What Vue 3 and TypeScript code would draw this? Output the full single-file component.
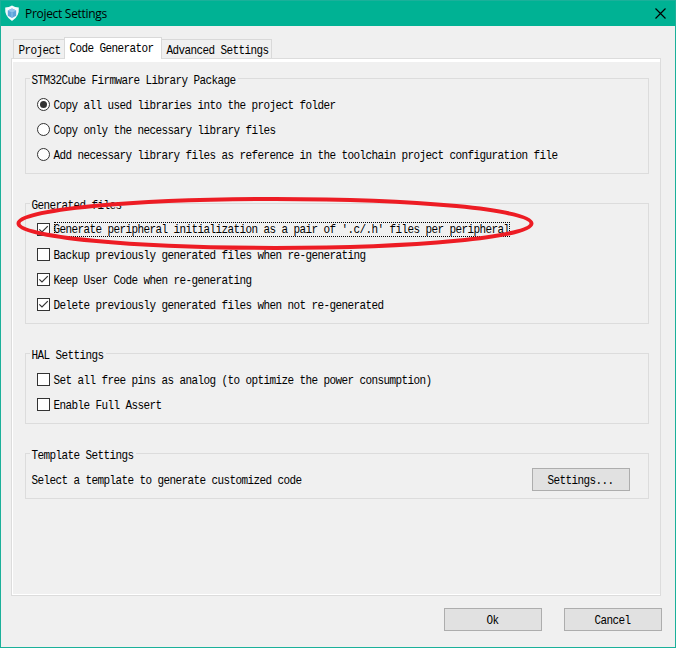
<script setup lang="ts">
import { ref } from 'vue'

interface Option {
  label: string
  checked: boolean
  focused?: boolean
}

const tabs = ['Project', 'Code Generator', 'Advanced Settings']
const activeTab = ref(1)

const libraries = [
  'Copy all used libraries into the project folder',
  'Copy only the necessary library files',
  'Add necessary library files as reference in the toolchain project configuration file',
]
const library = ref(0)

const generated = ref<Option[]>([
  { label: "Generate peripheral initialization as a pair of '.c/.h' files per peripheral", checked: true, focused: true },
  { label: 'Backup previously generated files when re-generating', checked: false },
  { label: 'Keep User Code when re-generating', checked: true },
  { label: 'Delete previously generated files when not re-generated', checked: true },
])

const hal = ref<Option[]>([
  { label: 'Set all free pins as analog (to optimize the power consumption)', checked: false },
  { label: 'Enable Full Assert', checked: false },
])
</script>

<template>
  <div class="window">
    <header class="titlebar">
      <svg class="logo" width="16" height="17" viewBox="0 0 16 17">
        <path d="M8 .5 Q11 2.4 14.8 2.6 Q15.6 11.8 8 16 Q.4 11.8 1.2 2.6 Q5 2.4 8 .5Z" fill="#f4fafd" />
        <path d="M8 3.6 12.2 5.5V10.7L8 13 3.8 10.7V5.5Z" fill="#5fa3db" />
        <path d="M8 3.6 12.2 5.5 8 7.4 3.8 5.5Z" fill="#8fc3ec" />
        <path d="M8 7.6V12.6" stroke="#9bcaf0" stroke-width=".8" />
      </svg>
      <span class="title">Project Settings</span>
      <svg class="close" width="11" height="11" viewBox="0 0 11 11">
        <path d="M.5 .5 10.5 10.5M10.5 .5 .5 10.5" stroke="#000" stroke-width="1.2" />
      </svg>
    </header>

    <nav class="tabs">
      <div v-for="(t, i) in tabs" :key="t" class="tab" :class="{ active: i === activeTab }" @click="activeTab = i">
        <span class="txt">{{ t }}</span>
      </div>
    </nav>

    <main class="panel">
      <section class="group">
        <div class="legend"><span class="txt">STM32Cube Firmware Library Package</span></div>
        <div v-for="(l, i) in libraries" :key="l" class="row" @click="library = i">
          <svg class="mark" width="13" height="13" viewBox="0 0 13 13">
            <circle cx="6.5" cy="6.5" r="6" fill="#fff" stroke="#333" />
            <circle v-if="i === library" cx="6.5" cy="6.5" r="3.5" fill="#333" />
          </svg>
          <span class="label"><span class="txt">{{ l }}</span></span>
        </div>
      </section>

      <section class="group files">
        <div class="legend"><span class="txt">Generated files</span></div>
        <div v-for="o in generated" :key="o.label" class="row" @click="o.checked = !o.checked">
          <svg class="mark" width="13" height="13" viewBox="0 0 13 13">
            <rect x=".5" y=".5" width="12" height="12" fill="#fff" stroke="#333" />
            <path v-if="o.checked" d="M2.3 6.3 5 9 10.8 3.2" fill="none" stroke="#333" stroke-width="1.2" />
          </svg>
          <span class="label" :class="{ focused: o.focused }"><span class="txt">{{ o.label }}</span></span>
        </div>
        <svg class="highlight" width="520" height="56" viewBox="0 0 520 56">
          <ellipse cx="260" cy="28.4" rx="256.5" ry="24.5" fill="none" stroke="#ed1c24" stroke-width="4" />
        </svg>
      </section>

      <section class="group">
        <div class="legend"><span class="txt">HAL Settings</span></div>
        <div v-for="o in hal" :key="o.label" class="row" @click="o.checked = !o.checked">
          <svg class="mark" width="13" height="13" viewBox="0 0 13 13">
            <rect x=".5" y=".5" width="12" height="12" fill="#fff" stroke="#333" />
            <path v-if="o.checked" d="M2.3 6.3 5 9 10.8 3.2" fill="none" stroke="#333" stroke-width="1.2" />
          </svg>
          <span class="label"><span class="txt">{{ o.label }}</span></span>
        </div>
      </section>

      <section class="group template">
        <div class="legend"><span class="txt">Template Settings</span></div>
        <div class="row">
          <span class="txt">Select a template to generate customized code</span>
          <button class="btn"><span class="txt">Settings...</span></button>
        </div>
      </section>
    </main>

    <footer class="footer">
      <button class="btn"><span class="txt">Ok</span></button>
      <button class="btn"><span class="txt">Cancel</span></button>
    </footer>
  </div>
</template>

<style>
body {
  margin: 0;
}
</style>

<style scoped>
.window {
  box-sizing: border-box;
  width: 676px;
  height: 648px;
  border: 1px solid #1bb09a;
  background: #f0f0f0;
  display: flex;
  flex-direction: column;
  overflow: hidden;
  color: #000;
  font-family: "Liberation Mono", monospace;
  font-size: 11px;
  line-height: 14px;
}
.txt {
  display: inline-block;
  letter-spacing: -0.601px;
  white-space: pre;
  transform: translate(-0.5px, 0.7px) scaleY(1.12);
}
.titlebar {
  height: 25px;
  flex: none;
  display: flex;
  align-items: center;
  padding: 0 9px 0 3px;
  background: #00b294;
  font-family: "Open Sans", "Noto Sans", sans-serif;
  font-size: 12px;
}
.title {
  margin-left: 5px;
  letter-spacing: -0.3px;
  flex: 1;
}
.tabs {
  height: 32px;
  flex: none;
  display: flex;
  align-items: flex-end;
  padding-left: 12px;
}
.tab {
  box-sizing: border-box;
  height: 19px;
  padding: 3px 3px 0 5px;
  border: 1px solid #d9d9d9;
  border-bottom: 0;
}
.tab:first-child {
  width: 51px;
  border-right: 0;
}
.tab:last-child {
  width: 110px;
  padding-left: 5px;
  border-left: 0;
}
.tab.active {
  width: 98px;
  height: 22px;
  margin-bottom: -1px;
  padding-top: 3px;
  background: #fff;
  position: relative;
}
.panel {
  box-sizing: border-box;
  flex: none;
  width: 650px;
  height: 538px;
  margin-left: 10px;
  border: 1px solid #dcdcdc;
  box-shadow: inset 1px -1px #fff, inset 0 3px #fff;
  padding: 19px 11px 0 13px;
  display: flex;
  flex-direction: column;
  gap: 29px;
}
.group {
  box-sizing: border-box;
  position: relative;
  border: 1px solid #dcdcdc;
  padding: 0 11px 6px;
}
.legend {
  width: max-content;
  height: 14px;
  margin: -6px 0 5px -7px;
  padding: 0 2px;
  background: #f0f0f0;
}
.row {
  height: 25px;
  display: flex;
  align-items: center;
}
.mark {
  flex: none;
  margin-bottom: 1px;
}
.label {
  height: 14px;
  margin-left: 4px;
}
.label.focused {
  height: 15px;
  outline: 1px dotted #000;
  outline-offset: -1px;
}
.template .row {
  justify-content: space-between;
  padding: 0 7px 0 0;
  margin-left: -5px;
}
.template {
  height: 46px;
}
.btn {
  box-sizing: border-box;
  width: 98px;
  height: 23px;
  padding: 0;
  border: 1px solid #adadad;
  background: #e1e1e1;
  color: #000;
  font: inherit;
}
.footer {
  display: flex;
  justify-content: flex-end;
  gap: 22px;
  padding: 12px 13px 0 0;
}
.highlight {
  position: absolute;
  left: -11px;
  top: -9px;
  pointer-events: none;
}
</style>
